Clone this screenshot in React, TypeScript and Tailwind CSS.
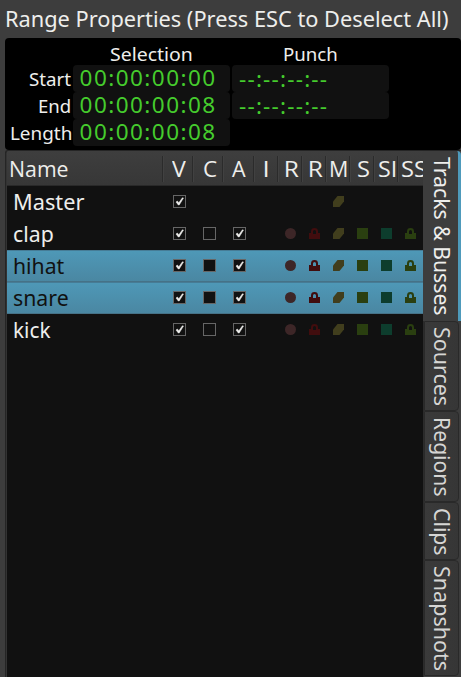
import { useLayoutEffect, useRef, useState } from 'react';

const FONT = "font-['Noto_Sans','Open_Sans',sans-serif]";

type TextProps = { text: string; size: number; ink: number; vertical?: boolean; className?: string };

/** Label whose visible glyphs fill exactly `ink` pixels along the writing direction. */
function Fit({ text, size, ink, vertical, className = 'h-8 leading-8' }: TextProps) {
  const ref = useRef<HTMLSpanElement>(null);
  const [transform, setTransform] = useState('none');
  useLayoutEffect(() => {
    const ctx = document.createElement('canvas').getContext('2d');
    if (!ctx || !ref.current) return;
    ctx.font = `${size}px ${getComputedStyle(ref.current).fontFamily}`;
    const m = ctx.measureText(text);
    const start = -m.actualBoundingBoxLeft;
    const scale = ink / (m.actualBoundingBoxRight - start);
    setTransform(
      vertical
        ? `translateY(${-start * scale}px) scaleY(${scale})`
        : `translateX(${-start * scale}px) scaleX(${scale})`,
    );
  }, [text, size, ink, vertical]);
  return (
    <span
      className={`block shrink-0 whitespace-nowrap ${vertical ? 'w-8' : className}`}
      style={vertical ? { height: ink } : { width: ink }}
    >
      <span
        ref={ref}
        className={`inline-block origin-top-left ${vertical ? 'leading-8 [writing-mode:vertical-rl]' : ''}`}
        style={{ fontSize: size, transform }}
      >
        {text}
      </span>
    </span>
  );
}

function Clock({ value, blank }: { value: string; blank?: boolean }) {
  return (
    <div className="h-[27px] w-[157px] rounded-[4px] bg-[#111111]">
      <span
        className={`block whitespace-nowrap text-[22.5px] leading-[25px] text-[#45cc2d] ${
          blank ? 'pl-[7px] pt-px tracking-[1.2px]' : 'pl-[6.6px] tracking-[1.45px]'
        }`}
      >
        {value}
      </span>
    </div>
  );
}

function ClockRow({ label, ink, gap, value, punch }: { label: string; ink: number; gap: string; value: string; punch?: string }) {
  return (
    <div className="flex h-[27px]">
      <div className={`flex w-[68px] justify-end ${gap}`}>
        <Fit text={label} size={18.3} ink={ink} className="h-[27px] leading-[27px]" />
      </div>
      <Clock value={value} />
      <div className="w-[2px]" />
      {punch && <Clock value={punch} blank />}
    </div>
  );
}

function Check({ on }: { on: boolean }) {
  return (
    <span className="flex size-[13px] border border-[#666666] bg-[#111111]">
      {on && (
        <svg viewBox="0 0 11 11" className="size-[11px]">
          <path d="M2 6 L3.4 5 L4.8 6.8 L8.4 1.8 L9.5 2 L5.2 9 L4.3 9 Z" fill="#eeeeec" stroke="#eeeeec" strokeWidth=".5" />
        </svg>
      )}
    </span>
  );
}

function Lock({ body }: { body: string }) {
  return (
    <svg viewBox="0 0 11 11" className="size-[11px]">
      <path
        d="M0 5H2V3.4Q2 0 5.5 0T9 3.4V5H11V11H0ZM4 6H7V3.6Q7 2 5.5 2T4 3.6Z"
        fill={body}
        fillRule="evenodd"
      />
    </svg>
  );
}

function Mute() {
  return (
    <svg viewBox="0 0 11 11" className="size-[11px]">
      <path d="M4.5 0H11V5.5L6.5 11H0V5.5Z" fill="#413e1d" />
    </svg>
  );
}

type Track = { name: string; ink: number; pad: string; selected?: boolean; master?: boolean };

const tracks: Track[] = [
  { name: 'Master', ink: 69.5, pad: 'pl-[7.5px]', master: true },
  { name: 'clap', ink: 39.5, pad: 'pl-[6.5px]' },
  { name: 'hihat', ink: 50.5, pad: 'pl-[7px]', selected: true },
  { name: 'snare', ink: 54.5, pad: 'pl-[6.5px]', selected: true },
  { name: 'kick', ink: 37, pad: 'pl-[7px]' },
];

const GRID = 'grid grid-cols-[156px_30px_30px_31px_24px_24px_24px_24px_24px_24px_25px]';

function TrackRow({ t }: { t: Track }) {
  const icon = 'pl-[7px] pt-[10px]';
  const box = 'pl-[10px] pt-[9px]';
  return (
    <div
      className={`${GRID} h-8 ${
        t.selected
          ? 'border-y border-t-[#467c96] border-b-[#467287] bg-linear-to-b from-[#4e98b7] to-[#4a87a2] text-[#111111] *:-mt-px'
          : 'text-[#eeeeec]'
      }`}
    >
      <div className={t.pad}>
        <Fit text={t.name} size={21.5} ink={t.ink} />
      </div>
      <div className={box}><Check on /></div>
      <div className={box}>{!t.master && <Check on={false} />}</div>
      <div className={box}>{!t.master && <Check on />}</div>
      <div />
      <div className={icon}>{!t.master && <div className="size-[11px] rounded-full bg-[#3d2627]" />}</div>
      <div className={icon}>{!t.master && <Lock body="#410d0e" />}</div>
      <div className={icon}><Mute /></div>
      <div className={icon}>{!t.master && <div className="size-[11px] bg-[#2a3f10]" />}</div>
      <div className={icon}>{!t.master && <div className="size-[11px] bg-[#0d3d2d]" />}</div>
      <div className={icon}>{!t.master && <Lock body="#2a3f10" />}</div>
    </div>
  );
}

const headers = [
  { text: 'Name', ink: 56.5, pad: 'pl-[4px]' },
  { text: 'V', ink: 14, pad: 'pl-[9px]' },
  { text: 'C', ink: 12.5, pad: 'pl-[10.5px]' },
  { text: 'A', ink: 14, pad: 'pl-[9px]' },
  { text: 'I', ink: 2.4, pad: 'pl-[10.8px]' },
  { text: 'R', ink: 12.5, pad: 'pl-[7.5px]' },
  { text: 'R', ink: 12.5, pad: 'pl-[7.5px]' },
  { text: 'M', ink: 16, pad: 'pl-[5px]' },
  { text: 'S', ink: 11, pad: 'pl-[7.5px]' },
  { text: 'SI', ink: 16, pad: 'pl-[4.5px]' },
  { text: 'SS', ink: 24, pad: 'pl-[3.5px]' },
];

const tabs = [
  { text: 'Sources', ink: 77.5, cls: 'h-[90px] pt-[6px]' },
  { text: 'Regions', ink: 77, cls: 'h-[91px] pt-[7px]' },
  { text: 'Clips', ink: 46, cls: 'h-[58px] pt-[6px]' },
  { text: 'Snapshots', ink: 103.5, cls: 'h-[116px] pt-[5.5px]' },
];

export default function App() {
  return (
    <div className={`${FONT} flex h-[677px] w-[461px] flex-col overflow-hidden bg-[#3d3d3d] text-[#eeeeec]`}>
      <header className="h-[38px] shrink-0 pl-[6.5px] pt-[3px]">
        <Fit text="Range Properties (Press ESC to Deselect All)" size={21.5} ink={441} />
      </header>

      <section className="ml-[5px] flex h-[112px] shrink-0 flex-col rounded-[4px] bg-black">
        <div className="flex h-[27px] pl-[105px]">
          <Fit text="Selection" size={18.3} ink={81.5} />
          <div className="w-[92px]" />
          <Fit text="Punch" size={18.3} ink={52.5} />
        </div>
        <ClockRow label="Start" ink={42.5} gap="pr-[2px]" value="00:00:00:00" punch="--:--:--:--" />
        <ClockRow label="End" ink={31} gap="pr-[3.5px]" value="00:00:00:08" punch="--:--:--:--" />
        <ClockRow label="Length" ink={60} gap="pr-[2.5px]" value="00:00:00:08" />
      </section>

      <main className="flex min-h-0 flex-1">
        <section className="ml-[5px] flex w-[418px] flex-col overflow-hidden rounded-tl-[3px] border-l border-t border-[#252525] bg-[#111111]">
          <div className="flex min-h-0 flex-1 flex-col border-l border-[#333333]">
            <div
              className={`${GRID} h-[35px] shrink-0 border-b border-[#292929] bg-linear-to-b from-[#3e3e3e] to-[#373737] font-['Open_Sans','Noto_Sans',sans-serif]`}
            >
              {headers.map((h, i) => (
                <div key={i} className="flex">
                  <div className={`flex-1 pt-[2px] ${h.pad}`}>
                    <Fit text={h.text} size={21.5} ink={h.ink} />
                  </div>
                  {i < 10 && <div className="mt-[5px] -mr-px h-[26px] w-[2px] border-l border-[#2b2b2b] bg-[#414141]" />}
                </div>
              ))}
            </div>
            {tracks.map((t) => (
              <TrackRow key={t.name} t={t} />
            ))}
          </div>
        </section>

        <nav className="flex w-[38px] flex-col border-t border-[#252525]">
          <div className="flex h-[170px] shrink-0 rounded-tr-[4px] border-r-[3px] border-[#4e9abb] bg-[#3d3d3d] pt-[6px] pl-[4px]">
            <Fit vertical text="Tracks & Busses" size={22} ink={158} />
          </div>
          <div className="flex flex-1 flex-col border-l border-[#2b2b2b] pr-[2px]">
            {tabs.map((t) => (
              <div
                key={t.text}
                className={`shrink-0 rounded-r-[4px] border border-[#292929] bg-linear-to-r from-[#3a3a3a] to-[#363636] pl-[1.5px] text-[#d6d6d4] ${t.cls}`}
              >
                <Fit vertical text={t.text} size={22} ink={t.ink} />
              </div>
            ))}
          </div>
        </nav>
      </main>
    </div>
  );
}
